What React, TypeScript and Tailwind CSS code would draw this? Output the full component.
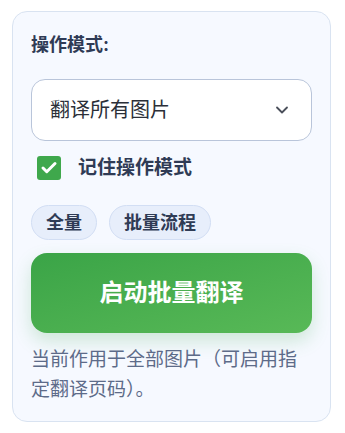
import { ChevronDown, Check } from 'lucide-react'

export default function App() {
  const chips = ['全量', '批量流程']

  return (
    <div className="w-[345px] h-[433px] bg-white pt-[11px] pl-[12px] font-['Inter','Noto_Sans_CJK_SC',sans-serif]">
      <div className="w-[319px] h-[411px] rounded-[15px] border border-[#d9e3f1] bg-[#f6f9ff] px-[18px] pt-[21px]">
        {/* Label */}
        <p className="text-[18px] font-bold text-[#2f3b55] leading-[24px]">操作模式:</p>

        {/* Select */}
        <div className="mt-[22px] h-[62px] w-[281px] rounded-[14px] border border-[#b9c5da] bg-white flex items-center justify-between pl-[18px] pr-[19px]">
          <span className="text-[20px] text-[#2b2f38]">翻译所有图片</span>
          <ChevronDown size={20} strokeWidth={2.2} className="text-[#4a4f5a]" />
        </div>

        {/* Remember */}
        <label className="mt-[15px] h-[24px] flex items-center gap-[17px] pl-[6px]">
          <span className="w-[24px] h-[24px] rounded-[3px] bg-[#3fa84c] flex items-center justify-center">
            <Check size={18} strokeWidth={4} className="text-white" />
          </span>
          <span className="text-[19px] font-bold text-[#2f3b55]">记住操作模式</span>
        </label>

        {/* Chips */}
        <div className="mt-[25px] flex gap-[12px]">
          {chips.map(c => (
            <span
              key={c}
              className="h-[35px] px-[14px] rounded-full border border-[#d2def4] bg-[#e7eefb] flex items-center text-[18px] font-bold text-[#2f3b55]"
            >
              {c}
            </span>
          ))}
        </div>

        {/* Start button */}
        <button className="mt-[13px] w-[281px] h-[80px] rounded-[16px] bg-gradient-to-br from-[#3aa447] to-[#58b957] text-white text-[24px] font-bold shadow-[0_8px_18px_rgba(63,168,76,0.22)]">
          启动批量翻译
        </button>

        {/* Hint */}
        <p className="mt-[12px] text-[19px] leading-[30px] text-[#5d6b89]">
          当前作用于全部图片（可启用指定翻译页码）。
        </p>
      </div>
    </div>
  )
}
